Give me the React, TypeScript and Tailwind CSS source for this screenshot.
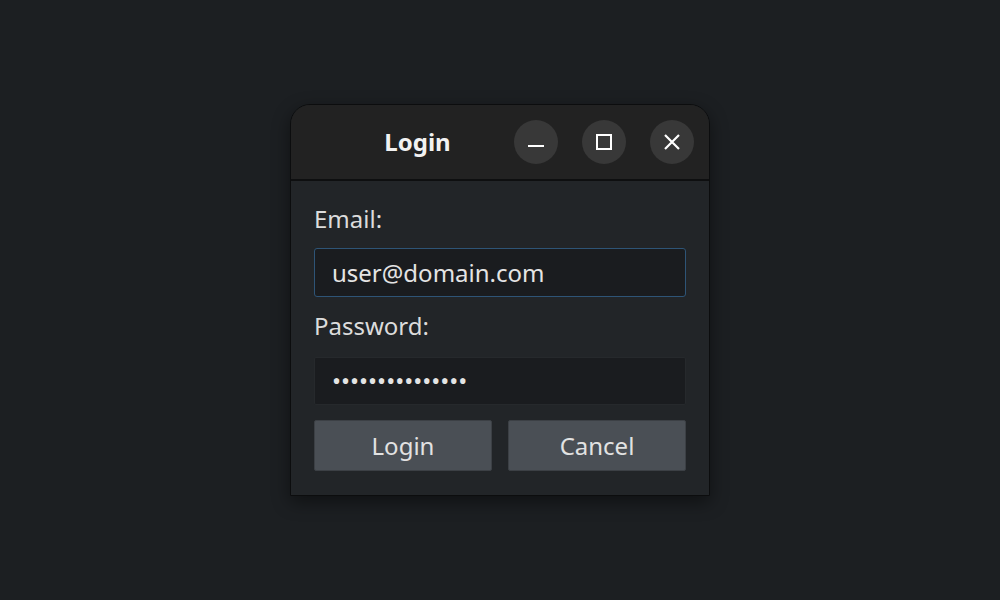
import React from "react";

export default function App() {
  const font = { fontFamily: '"Noto Sans", "Open Sans", sans-serif' };
  return (
    <div
      className="w-[1000px] h-[600px] bg-[#1c1f22] flex items-start justify-center pt-[104px]"
      style={font}
    >
      <div className="w-[420px] flex flex-col border border-[#0c0d0e] rounded-t-[20px] shadow-[0_6px_18px_rgba(0,0,0,0.45)] overflow-hidden">
        {/* Title bar */}
        <div className="h-[74px] bg-[#222222] flex items-center pr-[15px]">
          <div className="flex-1 flex justify-center pl-[30px]">
            <span className="text-[24px] font-bold text-[#f2f2f2] leading-none">Login</span>
          </div>
          <div className="flex items-center gap-[24px]">
            <button className="w-[44px] h-[44px] rounded-full bg-[#383838] flex items-center justify-center">
              <svg width="18" height="18" viewBox="0 0 18 18">
                <rect x="1" y="12" width="16" height="2" fill="#ffffff" />
              </svg>
            </button>
            <button className="w-[44px] h-[44px] rounded-full bg-[#383838] flex items-center justify-center">
              <svg width="18" height="18" viewBox="0 0 18 18">
                <rect x="2" y="2" width="14" height="14" fill="none" stroke="#ffffff" strokeWidth="2" />
              </svg>
            </button>
            <button className="w-[44px] h-[44px] rounded-full bg-[#383838] flex items-center justify-center">
              <svg width="20" height="20" viewBox="0 0 20 20">
                <path d="M3 3 L17 17 M17 3 L3 17" stroke="#ffffff" strokeWidth="2.2" strokeLinecap="butt" />
              </svg>
            </button>
          </div>
        </div>
        <div className="h-[2px] bg-[#0e0f10]" />
        {/* Body */}
        <div className="bg-[#222528] flex flex-col px-[23px] pt-[22px] pb-[24px]">
          <label className="text-[24px] leading-[32px] text-[#dcdcdc]">Email:</label>
          <div className="mt-[13px] h-[49px] rounded-[3px] border border-[#2e5476] bg-[#1a1c1f] flex items-center px-[17px]">
            <span className="text-[24px] text-[#e4e4e4] leading-none">user@domain.com</span>
          </div>
          <label className="mt-[13px] text-[24px] leading-[32px] text-[#dcdcdc]">Password:</label>
          <div className="mt-[15px] h-[48px] rounded-[2px] border border-[#26292c] bg-[#1a1c1f] flex items-center px-[17px]">
            <span className="text-[24px] text-[#e4e4e4] leading-none">•••••••••••••••</span>
          </div>
          <div className="mt-[15px] grid grid-cols-2 gap-[16px]">
            <button className="h-[51px] rounded-[2px] bg-[#4a4f55] border border-[#3c4045] text-[24px] text-[#e2e2e2]">
              Login
            </button>
            <button className="h-[51px] rounded-[2px] bg-[#4a4f55] border border-[#3c4045] text-[24px] text-[#e2e2e2]">
              Cancel
            </button>
          </div>
        </div>
      </div>
    </div>
  );
}
